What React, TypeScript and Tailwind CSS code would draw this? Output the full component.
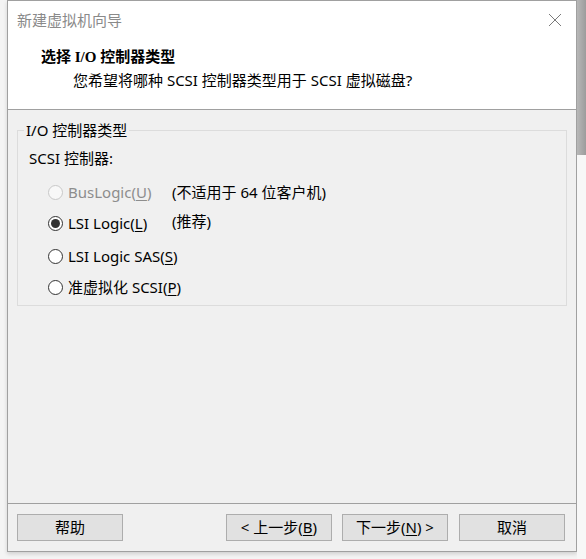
import React from 'react'

const ui = { fontFamily: '"Noto Sans", "Noto Sans CJK SC", sans-serif' }

function Mn({ children }: { children: React.ReactNode }) {
  return <span className="underline underline-offset-2 decoration-1">{children}</span>
}

function Radio({ checked, disabled, children }: { checked?: boolean; disabled?: boolean; children: React.ReactNode }) {
  return (
    <div className="flex items-center h-[20px]">
      <span
        className={`w-[15px] h-[15px] rounded-full border flex items-center justify-center mr-[5px] ${
          disabled ? 'border-[#c8c8c8] bg-[#f8f8f8]' : 'border-[#333] bg-white'
        }`}
      >
        {checked && <span className="w-[9px] h-[9px] rounded-full bg-[#333]" />}
      </span>
      <span className={disabled ? 'text-[#8d8d8d]' : 'text-black'}>{children}</span>
    </div>
  )
}

function Btn({ children }: { children: React.ReactNode }) {
  return (
    <button className="w-[106px] h-[27px] bg-[#e1e1e1] border border-[#adadad] text-[15px] text-black flex items-center justify-center">
      {children}
    </button>
  )
}

export default function App() {
  return (
    <div className="w-[586px] h-[559px] flex bg-[#f4f4f4] overflow-hidden" style={ui}>
      <div className="w-[7px]" />
      <div className="w-[570px] h-[552px] border border-[#a0a0a0] flex flex-col bg-[#f0f0f0] shadow-[0_2px_4px_rgba(0,0,0,0.15)]">
        {/* header */}
        <div className="h-[109px] bg-white border-b border-[#a0a0a0] relative">
          <div className="pl-[9px] pt-[8px] text-[15px] text-[#8a8a8a] leading-[22px]">新建虚拟机向导</div>
          <svg className="absolute right-[14px] top-[12px]" width="14" height="14" viewBox="0 0 14 14">
            <path d="M1 1 L13 13 M13 1 L1 13" stroke="#7a7a7a" strokeWidth="1" />
          </svg>
          <div className="pl-[33px] pt-[16px] text-[15px] font-bold leading-[20px] text-black" style={{ fontFamily: '"Liberation Serif", "Noto Sans CJK SC", serif' }}>
            选择 I/O 控制器类型
          </div>
          <div className="pl-[65px] pt-[2px] text-[15px] leading-[22px] text-black">
            您希望将哪种 SCSI 控制器类型用于 SCSI 虚拟磁盘?
          </div>
        </div>
        {/* body */}
        <div className="flex-1 px-[9px] pt-[20px]">
          <div className="relative border border-[#dcdcdc] h-[176px] pt-[16px] pl-[10px] text-[15px]">
            <div className="absolute -top-[12px] left-[6px] px-[2px] bg-[#f0f0f0] leading-[22px]">I/O 控制器类型</div>
            <div className="leading-[22px] ml-[1px]">SCSI 控制器:</div>
            <div className="pl-[20px] pt-[13px] flex flex-col gap-[11px]">
              <div className="flex">
                <div className="w-[124px]">
                  <Radio disabled>
                    BusLogic(<Mn>U</Mn>)
                  </Radio>
                </div>
                <span className="leading-[20px]">(不适用于 64 位客户机)</span>
              </div>
              <div className="flex">
                <div className="w-[124px]">
                  <Radio checked>
                    LSI Logic(<Mn>L</Mn>)
                  </Radio>
                </div>
                <span className="leading-[20px] -mt-[2px]">(推荐)</span>
              </div>
              <div className="mt-[2px]">
                <Radio>
                  LSI Logic SAS(<Mn>S</Mn>)
                </Radio>
              </div>
              <Radio>
                准虚拟化 SCSI(<Mn>P</Mn>)
              </Radio>
            </div>
          </div>
        </div>
        {/* footer */}
        <div className="h-[48px] border-t border-[#a0a0a0] flex items-start pt-[10px] pl-[9px] pr-[11px]">
          <Btn>帮助</Btn>
          <div className="flex-1" />
          <div className="flex gap-[10px]">
            <Btn>
              &lt; 上一步(<Mn>B</Mn>)
            </Btn>
            <Btn>
              下一步(<Mn>N</Mn>) &gt;
            </Btn>
          </div>
          <div className="w-[11px]" />
          <Btn>取消</Btn>
        </div>
      </div>
      <div className="w-[9px] flex flex-col">
        <div className="h-[155px] bg-gradient-to-r from-[#b8b8b8] to-[#9c9c9c]" />
        <div className="flex-1 bg-[#f7f7f7]" />
      </div>
    </div>
  )
}
